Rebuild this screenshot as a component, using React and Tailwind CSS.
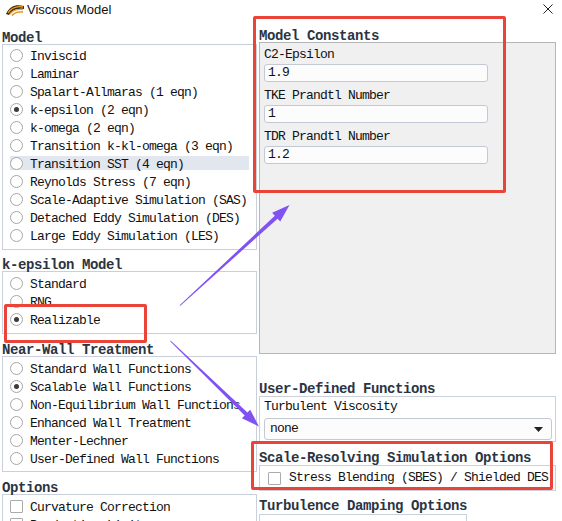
import React from "react";

const mono = "font-mono";
const body = "whitespace-nowrap text-[13px] tracking-[-0.8px] text-[#111] font-mono";

const Radio = ({ label, checked, hl }) => (
  <div className="mx-[7px] flex h-[18px] items-center">
    <div className={`flex h-[14px] w-full items-center ${hl ? "bg-[#e2e7ef]" : ""}`}>
      <span className="flex h-[13px] w-[13px] shrink-0 items-center justify-center rounded-full border border-[#a6a6a6] bg-white">
        {checked && <span className="h-[5px] w-[5px] rounded-full bg-[#3a3a3a]" />}
      </span>
      <span className={`ml-[7px] pt-[3px] leading-[14px] ${body}`}>{label}</span>
    </div>
  </div>
);

const Check = ({ label }) => (
  <div className="mx-[7px] flex h-[18px] items-center">
    <span className="h-[13px] w-[13px] shrink-0 rounded-[1px] border border-[#ababab] bg-white" />
    <span className={`ml-[7px] pt-[3px] leading-[14px] ${body}`}>{label}</span>
  </div>
);

const Header = ({ children, className = "" }) => (
  <div
    className={`whitespace-nowrap text-[14px] font-bold tracking-[-0.4px] text-[#2b3442] ${mono} ${className}`}
  >
    {children}
  </div>
);

const Field = ({ label, value, first }) => (
  <div>
    <div className={`${first ? "pt-[3px]" : "pt-[5px]"} pl-[4px] leading-[18px] ${body}`}>{label}</div>
    <div
      className={`ml-[4px] flex h-[18px] w-[224px] items-center rounded-[3px] border border-[#c4cad5] bg-[#fcfcfc] pl-[3px] leading-[14px] ${body}`}
    >
      {value}
    </div>
  </div>
);

const Arrows = () => (
  <svg className="pointer-events-none absolute left-0 top-0" width="562" height="521">
    <polygon
      fill="#8052f2"
      points="179.66,305.13 274.85,215.73 272.14,212.78 289.5,205 280.26,221.62 277.55,218.67 180.34,305.87"
    />
    <polygon
      fill="#8052f2"
      points="170.15,341.36 244.66,415.43 241.88,418.3 259,426.5 250.22,409.68 247.44,412.55 170.85,340.64"
    />
  </svg>
);

export default function App() {
  return (
    <div className="relative h-[521px] w-[562px] overflow-hidden bg-white">
      {/* title bar */}
      <div className="flex h-[24px] items-start">
        <svg className="ml-[5px] mt-[3px]" width="20" height="14" viewBox="0 0 20 14">
          <path d="M1 11 C5 2 12 1 19 3 L19 6 C12 5 7 7 4 12 Z" fill="#3a2a14" />
          <path d="M3 10 C7 4 12 3 18 4" stroke="#f0a020" strokeWidth="1.3" fill="none" />
          <path d="M5 11 C8 7 12 6 18 6.5" stroke="#f0a020" strokeWidth="1.3" fill="none" />
          <path d="M7 12.5 C10 9 13 8.5 18 9" stroke="#d98a10" strokeWidth="1.3" fill="none" />
        </svg>
        <span className="ml-[2px] mt-[1px] font-[family-name:Liberation_Sans,sans-serif] text-[13px] leading-[18px] text-[#111]">
          Viscous Model
        </span>
        <svg className="ml-auto mr-[9px] mt-[4px]" width="10" height="10" viewBox="0 0 10 10">
          <path d="M0.5 0.5 L9.5 9.5 M9.5 0.5 L0.5 9.5" stroke="#222" strokeWidth="1" />
        </svg>
      </div>

      <div className="flex">
        {/* left column */}
        <div className="w-[257px] pl-[2px]">
          <Header className="pt-[8px] leading-[12px]">Model</Header>
          <div className="border border-[#c9d0dc] pb-[5px] pt-[1px]">
            <Radio label="Inviscid" />
            <Radio label="Laminar" />
            <Radio label="Spalart-Allmaras (1 eqn)" />
            <Radio label="k-epsilon (2 eqn)" checked />
            <Radio label="k-omega (2 eqn)" />
            <Radio label="Transition k-kl-omega (3 eqn)" />
            <Radio label="Transition SST (4 eqn)" hl />
            <Radio label="Reynolds Stress (7 eqn)" />
            <Radio label="Scale-Adaptive Simulation (SAS)" />
            <Radio label="Detached Eddy Simulation (DES)" />
            <Radio label="Large Eddy Simulation (LES)" />
          </div>

          <Header className="pt-[9px] leading-[12px]">k-epsilon Model</Header>
          <div className="border border-[#c9d0dc] pb-[5px] pt-[2px]">
            <Radio label="Standard" />
            <Radio label="RNG" />
            <Radio label="Realizable" checked />
          </div>

          <Header className="pt-[10px] leading-[12px]">Near-Wall Treatment</Header>
          <div className="border border-[#c9d0dc] pb-[4px] pt-[2px]">
            <Radio label="Standard Wall Functions" />
            <Radio label="Scalable Wall Functions" checked />
            <Radio label="Non-Equilibrium Wall Functions" />
            <Radio label="Enhanced Wall Treatment" />
            <Radio label="Menter-Lechner" />
            <Radio label="User-Defined Wall Functions" />
          </div>

          <Header className="pt-[10px] leading-[12px]">Options</Header>
          <div className="border border-[#c9d0dc] pb-[4px] pt-[2px]">
            <Check label="Curvature Correction" />
            <Check label="Production Limiter" />
          </div>
        </div>

        {/* right column */}
        <div className="ml-[2px] w-[297px]">
          <Header className="pt-[7px] leading-[11px]">Model Constants</Header>
          <div className="h-[312px] border border-[#b6b6b6] bg-[#f0f0f0]">
            <Field label="C2-Epsilon" value="1.9" first />
            <Field label="TKE Prandtl Number" value="1" />
            <Field label="TDR Prandtl Number" value="1.2" />
          </div>

          <Header className="pt-[29px] leading-[13px]">User-Defined Functions</Header>
          <div className="border border-[#cbd1dc] pb-[1px]">
            <div className={`pl-[4px] pt-[1px] leading-[18px] ${body}`}>Turbulent Viscosity</div>
            <div
              className={`ml-[4px] mt-[2px] flex h-[22px] w-[288px] items-center rounded-[3px] border border-[#c4cad5] bg-[#fcfcfc] pl-[5px] pr-[8px] leading-[14px] ${body}`}
            >
              none
              <svg className="ml-auto" width="9" height="5" viewBox="0 0 9 5">
                <path d="M0 0 L9 0 L4.5 5 Z" fill="#222" />
              </svg>
            </div>
          </div>

          <Header className="pt-[9px] leading-[14px]">Scale-Resolving Simulation Options</Header>
          <div className="border border-[#cbd1dc] pb-[3px] pt-[3px]">
            <div className="flex h-[18px] items-center pl-[8px]">
              <span className="h-[13px] w-[13px] shrink-0 rounded-[1px] border border-[#ababab] bg-white" />
              <span className={`ml-[8px] leading-[14px] ${body}`}>Stress Blending (SBES) / Shielded DES</span>
            </div>
          </div>

          <Header className="pt-[7px] leading-[16px]">Turbulence Damping Options</Header>
          <div className="w-[208px] border border-[#cbd1dc] pt-[5px]">
            <div className="flex h-[18px] items-center pl-[6px]">
              <span className="h-[13px] w-[13px] shrink-0 rounded-[1px] border border-[#ababab] bg-white" />
            </div>
          </div>
        </div>
      </div>

      {/* annotations */}
      <div className="pointer-events-none absolute left-[253px] top-[16px] h-[177px] w-[253px] rounded-[2px] border-[3px] border-[#ea4338]" />
      <div className="pointer-events-none absolute left-[251px] top-[441px] h-[49px] w-[302px] rounded-[2px] border-[3px] border-[#ea4338]" />
      <div className="pointer-events-none absolute left-[4px] top-[304px] h-[39px] w-[143px] rounded-[2px] border-[3px] border-[#ea4338]" />
      <Arrows />
    </div>
  );
}
